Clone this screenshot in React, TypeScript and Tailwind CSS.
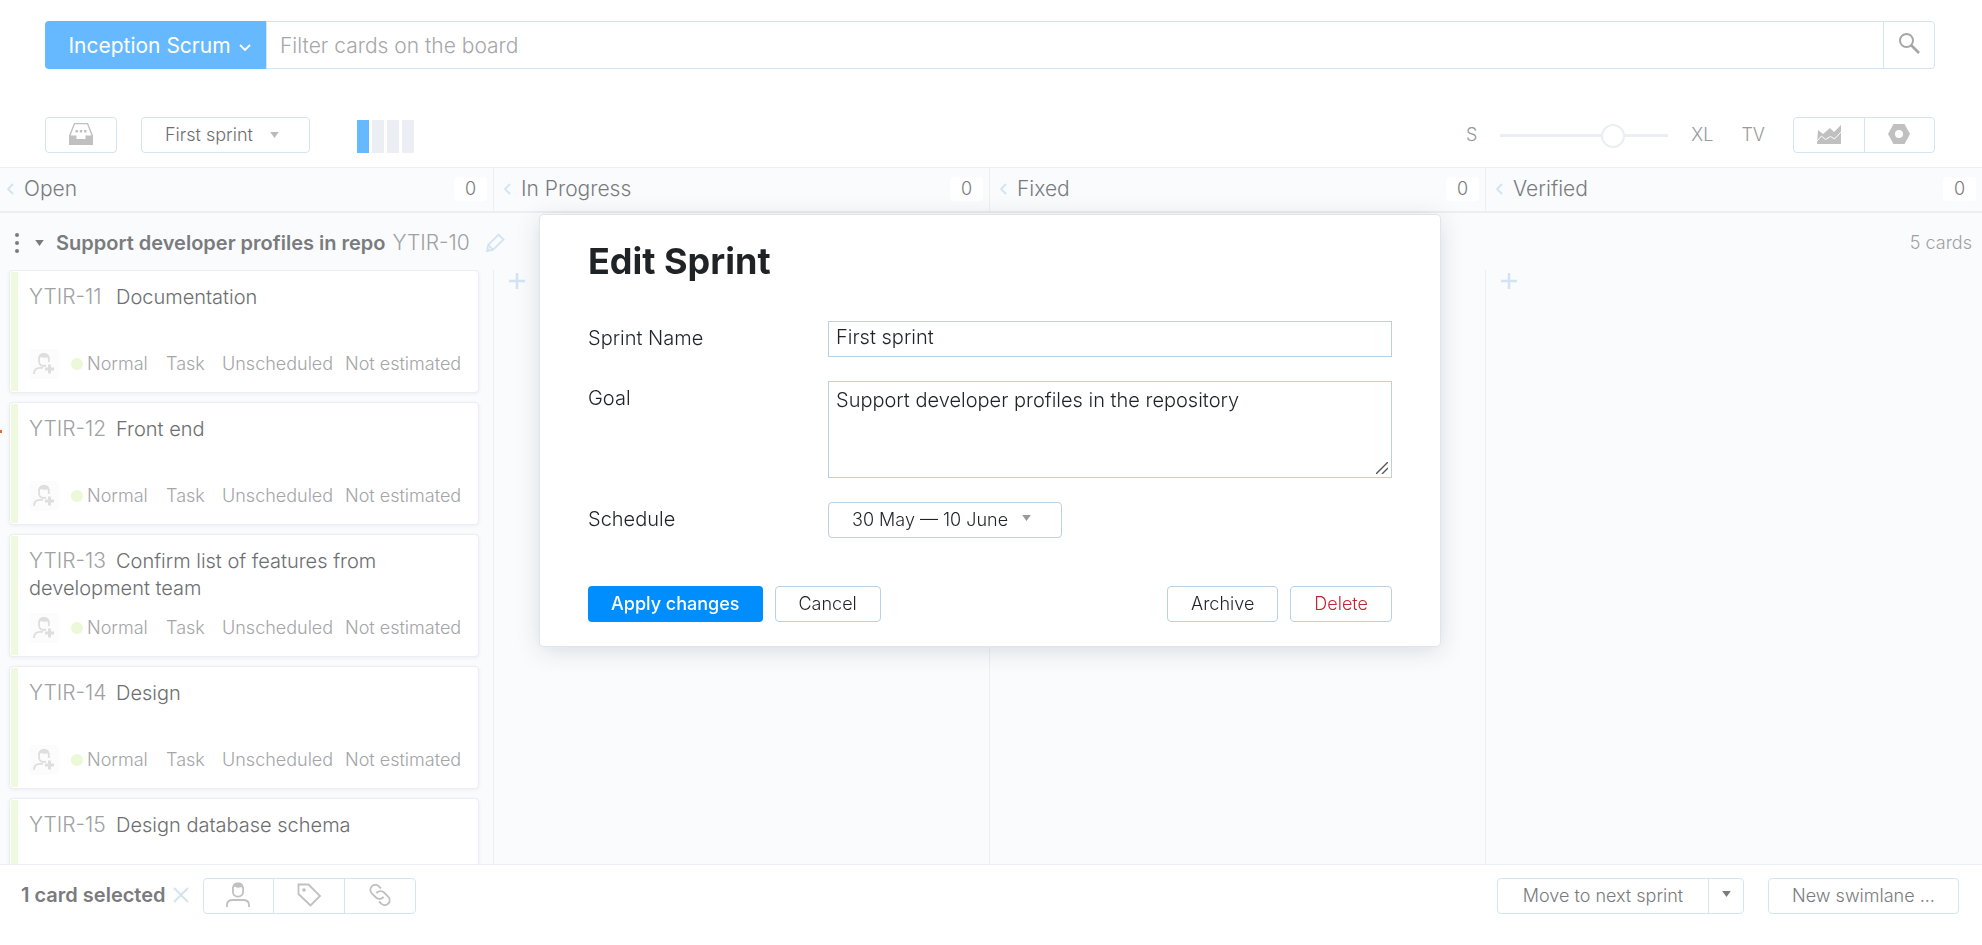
import { useState } from "react";
import type { ReactNode } from "react";

type Card = { id: string; title: string; fields?: [string, string, string, string] };

const COLUMNS = ["Open", "In Progress", "Fixed", "Verified"];

const DEFAULT_FIELDS: Card["fields"] = ["Normal", "Task", "Unscheduled", "Not estimated"];

const CARDS: Card[] = [
  { id: "YTIR-11", title: "Documentation", fields: DEFAULT_FIELDS },
  { id: "YTIR-12", title: "Front end", fields: DEFAULT_FIELDS },
  { id: "YTIR-13", title: "Confirm list of features from development team", fields: DEFAULT_FIELDS },
  { id: "YTIR-14", title: "Design", fields: DEFAULT_FIELDS },
  { id: "YTIR-15", title: "Design database schema" },
];

const boardGrid = "grid grid-cols-[494fr_496fr_496fr_496fr]";

function Triangle({ className }: { className: string }) {
  return (
    <svg viewBox="0 0 10 7" className={className} fill="currentColor" aria-hidden="true">
      <path d="M0 0h10L5 7z" />
    </svg>
  );
}

function UserIcon() {
  return (
    <svg viewBox="0 0 24 26" className="h-[26px] w-6" fill="none" stroke="currentColor" strokeWidth="1.8" aria-hidden="true">
      <path d="M1 25v-2c0-3.5 2.5-5 6-5h10c3.5 0 6 1.5 6 5v2" />
      <path d="M6.900 5v4.500c0 3 2 5.200 5.100 5.200s5.100-2.200 5.100-5.200V5" />
      <path d="M6.200 7c0-4.600 2-6.500 5.800-6.500 3.800 0 5.800 1.900 5.800 6.500-1-1.200-1.800-1.700-3-1.700-2 .6-4 .6-5.600-.6C8 5 7 5.700 6.200 7z" fill="currentColor" stroke="none" />
    </svg>
  );
}

function AddUserIcon() {
  return (
    <svg viewBox="0 0 22 22" className="size-[22px]" fill="none" stroke="currentColor" strokeWidth="1.8" aria-hidden="true">
      <path d="M1 21c0-4 2.5-6.200 6-6.200h3" />
      <path d="M6 4v3.500c0 3.500 2 5.500 4.800 5.500.8 0 1.500-.2 2.200-.6M15.800 9V4" />
      <path d="M5.200 6c0-4 2-6 5.700-6 3.800 0 5.700 2 5.700 6-1-1.200-2-1.500-3-1.500-2 .5-4 .3-5.400-.4C7 4.400 6 5 5.200 6z" fill="currentColor" stroke="none" />
      <path d="M12 16h9M16.500 11.500v9" strokeWidth="3" />
    </svg>
  );
}

function LinkIcon() {
  return (
    <svg viewBox="0 0 22 22" className="size-[22px]" fill="none" stroke="currentColor" strokeWidth="1.8" aria-hidden="true">
      <path d="M12 4.500L9.800 2.300a4.900 4.900 0 00-7 0 4.900 4.900 0 000 7l4.200 4.200a4.900 4.900 0 007 0l.5-.8" />
      <path d="M10 17.500l2.200 2.200a4.900 4.900 0 007 0 4.900 4.900 0 000-7L15 8.500a4.900 4.900 0 00-7 0l-.5.8" />
    </svg>
  );
}

function BoardCard({ card }: { card: Card }) {
  return (
    <article className="flex h-[123px] shrink-0 overflow-hidden rounded-[4px] border border-[#eaedf3] bg-white p-px shadow-[0_1px_4px_rgba(0,42,76,0.06)]">
      <div className="w-[7px] shrink-0 rounded-l-[2px] bg-[#eef9dd]" />
      <div className="flex flex-1 flex-col pt-[11px] pr-3 pb-3 pl-[11px]">
        <h3 className="text-xl leading-[27px] font-light text-[#6c6e70]">
          <a href="#" className="inline-block w-[87px] text-[21px] text-[#a0a1a3]">{card.id}</a>
          {card.title}
        </h3>
        {card.fields && (
          <div className="mt-auto flex h-[30px] items-center text-lg leading-6 font-light whitespace-nowrap text-[#a3a5a7]">
            <button type="button" aria-label="Assign" className="grid size-[30px] place-items-center rounded-[4px] bg-[#fcfcfc] text-[#dedede]">
              <AddUserIcon />
            </button>
            <span className="ml-3 size-3 rounded-full bg-[#ecf8d8]" />
            <span className="ml-1 w-[79px]">{card.fields[0]}</span>
            <span className="w-14">{card.fields[1]}</span>
            <span className="w-[123px]">{card.fields[2]}</span>
            <span>{card.fields[3]}</span>
          </div>
        )}
      </div>
    </article>
  );
}

function AddCardButton() {
  return (
    <button type="button" aria-label="Add card" className="mt-0.5 ml-3.5 block text-[#d3e3f1]">
      <svg viewBox="0 0 18 18" className="size-[18px]" stroke="currentColor" strokeWidth="2.5" aria-hidden="true">
        <path d="M1 9h16M9 1v16" />
      </svg>
    </button>
  );
}

function Header() {
  return (
    <header className="mt-[21px] mr-[47px] ml-[45px] flex h-12 shrink-0 text-[21px] font-light">
      <button type="button" className="flex w-[221px] items-center justify-center gap-2 rounded-l-[4px] bg-[#66b9ff] pt-0.5 pl-2 font-normal text-white">
        Inception Scrum
        <svg viewBox="0 0 12 8" className="mt-1 h-2 w-3" fill="none" stroke="currentColor" strokeWidth="1.8" aria-hidden="true">
          <path d="M1 1l5 5 5-5" />
        </svg>
      </button>
      <input
        type="text"
        aria-label="Filter cards"
        placeholder="Filter cards on the board"
        className="min-w-0 flex-1 border border-[#d3e4f3] bg-white px-[13px] pt-0.5 outline-none placeholder:text-[#a5a7a8]"
      />
      <button type="button" aria-label="Search" className="-ml-px grid w-[52px] place-items-center rounded-r-[4px] border border-[#d3e4f3] text-[#a5a6a8]">
        <svg viewBox="0 0 21 21" className="mb-1 size-[21px]" fill="none" stroke="currentColor" aria-hidden="true">
          <circle cx="7.5" cy="7.5" r="6.5" strokeWidth="2" />
          <path d="M12 12l8 8" strokeWidth="2.6" />
        </svg>
      </button>
    </header>
  );
}

function Toolbar() {
  const [zoom, setZoom] = useState(70);

  return (
    <div className="mt-12 mr-[47px] mb-3.5 ml-[45px] flex h-9 shrink-0 items-center text-lg font-light text-[#97999b]">
      <button type="button" aria-label="Backlog" className="grid h-9 w-[72px] place-items-center rounded-[4px] border border-[#d3e4f3] text-[#c0c0c0]">
        <svg viewBox="0 0 24 22" className="mb-0.5 h-[22px] w-6" fill="currentColor" aria-hidden="true">
          <path d="M5 0h14l5 12.500V22H0v-9.500zM5.900 1.300L1.600 12.500h5.900V16h9v-3.500h5.900L18.100 1.300z" fillRule="evenodd" />
          <path d="M6.500 7h2.400v2.400H6.500zM10.800 7h2.400v2.400h-2.400zM15.100 7h2.400v2.400h-2.400z" />
        </svg>
      </button>

      <div className="relative ml-6">
        <select aria-label="Sprint" className="h-9 w-[169px] appearance-none rounded-[4px] border border-[#d3e4f3] bg-white pl-[23px] text-lg text-[#6c6e70]">
          <option>First sprint</option>
        </select>
        <Triangle className="pointer-events-none absolute top-[15px] right-[31px] h-1.5 w-[9px] text-[#bbbbbb]" />
      </div>

      <div className="ml-[47px] flex h-[33px] gap-[3px] self-end">
        <div className="w-3 bg-[#66b9ff]" />
        <div className="w-3 bg-[#ebeef3]" />
        <div className="w-3 bg-[#ebeef3]" />
        <div className="w-3 bg-[#ebeef3]" />
      </div>

      <div className="ml-auto flex items-center">
        <label htmlFor="card-size">S</label>
        <input
          id="card-size"
          type="range"
          min={0}
          max={100}
          value={zoom}
          onChange={(e) => setZoom(Number(e.target.value))}
          className="mx-[23px] h-6 w-[168px] appearance-none bg-transparent [&::-webkit-slider-runnable-track]:h-[3px] [&::-webkit-slider-runnable-track]:bg-[#ebeef3] [&::-webkit-slider-thumb]:-mt-[10px] [&::-webkit-slider-thumb]:size-6 [&::-webkit-slider-thumb]:appearance-none [&::-webkit-slider-thumb]:rounded-full [&::-webkit-slider-thumb]:border-2 [&::-webkit-slider-thumb]:border-[#ebeef3] [&::-webkit-slider-thumb]:bg-white"
        />
        <span>XL</span>
        <button type="button" className="mr-7 ml-7">TV</button>
        <div className="flex h-9 w-[142px] divide-x divide-[#d3e4f3] rounded-[4px] border border-[#d3e4f3] text-[#c0c0c0]">
          <button type="button" aria-label="Chart" className="grid flex-1 place-items-center">
            <svg viewBox="0 0 24 19" className="mb-0.5 h-[19px] w-6" aria-hidden="true">
              <path d="M1 5l5 4 7-6 4 4 7-7v19H0z" fill="currentColor" />
              <path d="M0 16l4.500-5 4 3.500 5-3 4 2.500L24 7" fill="none" stroke="#fff" strokeWidth="1" />
            </svg>
          </button>
          <button type="button" aria-label="Settings" className="grid flex-1 place-items-center">
            <svg viewBox="0 0 22 20" className="mb-0.5 h-5 w-[22px]" fill="currentColor" aria-hidden="true">
              <path d="M5.500 0h11L22 10l-5.500 10h-11L0 10zM11 6a4 4 0 100 8 4 4 0 000-8z" fillRule="evenodd" />
            </svg>
          </button>
        </div>
      </div>
    </div>
  );
}

function Board() {
  return (
    <main className="flex min-h-0 flex-1 flex-col bg-[#fafbfd]">
      <div className={`${boardGrid} h-[46px] shrink-0 border-t border-b-2 border-[#ebeef3]`}>
        {COLUMNS.map((name) => (
          <div key={name} className="flex items-center border-r border-[#ebeef3] pr-1.5 pb-0.5 pl-2.5 first:pl-[7px] last:border-r-0">
            <button type="button" aria-label={`Collapse ${name}`} className="text-[#d3e3f1]">
              <svg viewBox="0 0 7 12" className="h-3 w-[7px]" fill="none" stroke="currentColor" strokeWidth="1.8" aria-hidden="true">
                <path d="M6 1L1 6l5 5" />
              </svg>
            </button>
            <h2 className="ml-2.5 text-[21px] leading-6 font-light text-[#797b7d]">{name}</h2>
            <span className="ml-auto grid h-6 w-[33px] place-items-center rounded-[4px] bg-white text-lg leading-6 font-light text-[#797b7d]">0</span>
          </div>
        ))}
      </div>

      <div className="flex h-[57px] shrink-0 items-center pt-1 pr-2.5 pb-0.5 pl-[15px] text-xl leading-6 font-light text-[#a0a1a3]">
        <button type="button" aria-label="Swimlane menu" className="text-[#797b7d]">
          <svg viewBox="0 0 4 20" className="h-5 w-1" fill="currentColor" aria-hidden="true">
            <circle cx="2" cy="2" r="2" />
            <circle cx="2" cy="10" r="2" />
            <circle cx="2" cy="18" r="2" />
          </svg>
        </button>
        <button type="button" aria-label="Collapse swimlane" className="ml-4 text-[#797b7d]">
          <Triangle className="h-1.5 w-[9px]" />
        </button>
        <h2 className="ml-3 font-semibold text-[#797b7d]">Support developer profiles in repo</h2>
        <a href="#" className="ml-[7px] text-[21px]">YTIR-10</a>
        <button type="button" aria-label="Edit" className="ml-4 text-[#d3e3f1]">
          <svg viewBox="0 0 19 19" className="size-[19px]" fill="none" stroke="currentColor" strokeWidth="1.8" aria-hidden="true">
            <path d="M1 18l1.200-6L12.500 1.500l5 5L7 16.800zM2.200 12L7 16.800M1 18l2-2" />
          </svg>
        </button>
        <span className="ml-auto text-lg">5 cards</span>
      </div>

      <div className={`${boardGrid} min-h-0 flex-1 overflow-hidden`}>
        <div className="flex min-h-0 flex-col gap-[9px] border-r border-[#ebeef3] pr-3.5 pl-[9px]">
          {CARDS.map((card) => (
            <BoardCard key={card.id} card={card} />
          ))}
        </div>
        {COLUMNS.slice(1).map((name) => (
          <div key={name} className="border-r border-[#ebeef3] last:border-r-0">
            <AddCardButton />
          </div>
        ))}
      </div>
    </main>
  );
}

function Footer() {
  return (
    <footer className="flex h-[81px] shrink-0 items-start border-t border-[#ebeef3] bg-white pt-[13px] pr-[23px] pl-[21px] text-lg font-light text-[#797b7d]">
      <strong className="text-xl leading-[34px] font-semibold">1 card selected</strong>
      <button type="button" aria-label="Clear selection" className="ml-[7px] grid h-[34px] place-items-center text-[#d3e3f1]">
        <svg viewBox="0 0 16 16" className="size-4" stroke="currentColor" strokeWidth="1.8" aria-hidden="true">
          <path d="M1 1l14 14M15 1L1 15" />
        </svg>
      </button>
      <div className="ml-3.5 flex h-9 w-[213px] divide-x divide-[#d3e4f3] rounded-[4px] border border-[#d3e4f3] text-[#c0c0c0]">
        <button type="button" aria-label="Assignee" className="grid flex-1 place-items-center pb-0.5">
          <UserIcon />
        </button>
        <button type="button" aria-label="Tag" className="grid flex-1 place-items-center pb-0.5">
          <svg viewBox="0 0 24 24" className="size-6" fill="none" stroke="currentColor" strokeWidth="1.8" aria-hidden="true">
            <path d="M1.500 1.500h10L23 13 13.500 22.500 1.500 11z" />
            <circle cx="7" cy="7" r="1.800" fill="currentColor" stroke="none" />
          </svg>
        </button>
        <button type="button" aria-label="Link" className="grid flex-1 place-items-center pb-0.5">
          <LinkIcon />
        </button>
      </div>

      <div className="ml-auto flex h-9 divide-x divide-[#d3e4f3] rounded-[4px] border border-[#d3e4f3]">
        <button type="button" className="w-[211px]">Move to next sprint</button>
        <button type="button" aria-label="More sprints" className="grid w-[34px] place-items-center pb-1">
          <Triangle className="h-1.5 w-[9px]" />
        </button>
      </div>
      <button type="button" className="ml-6 h-9 w-[191px] rounded-[4px] border border-[#d3e4f3]">New swimlane ...</button>
    </footer>
  );
}

function FormRow({ id, label, children }: { id: string; label: string; children: ReactNode }) {
  return (
    <div className="flex items-start">
      <label htmlFor={id} className="w-60 shrink-0 pt-[5px] text-xl leading-6">{label}</label>
      <div className="relative flex min-w-0 flex-1">{children}</div>
    </div>
  );
}

function DialogButton({ className, children }: { className?: string; children: ReactNode }) {
  return (
    <button type="button" className={`h-9 rounded-[4px] border border-[#b8d1e5] px-[23px] text-lg ${className ?? ""}`}>
      {children}
    </button>
  );
}

function EditSprintDialog() {
  const [name, setName] = useState("First sprint");
  const [goal, setGoal] = useState("Support developer profiles in the repository");

  return (
    <div className="fixed inset-0 flex items-start justify-center pt-[215px] pr-0.5">
      <form
        role="dialog"
        aria-labelledby="dialog-title"
        className="w-[900px] max-w-full rounded-[4px] bg-white px-12 pt-[26px] pb-6 font-light text-[#1f2326] shadow-[0_0_0_1px_#dfe5eb,0_4px_24px_rgba(0,42,56,0.15)]"
      >
        <h1 id="dialog-title" className="text-4xl leading-10 font-bold">Edit Sprint</h1>
        <div className="mt-10 flex flex-col gap-6">
          <FormRow id="sprint-name" label="Sprint Name">
            <input
              id="sprint-name"
              value={name}
              onChange={(e) => setName(e.target.value)}
              className="h-9 w-full border border-[#b8d1e5] px-[7px] pb-1 text-xl outline-none"
            />
          </FormRow>
          <FormRow id="goal" label="Goal">
            <textarea
              id="goal"
              value={goal}
              onChange={(e) => setGoal(e.target.value)}
              className="block h-[97px] w-full resize-none border border-[#b8d1e5] px-[7px] py-1.5 text-xl leading-6 outline-none"
            />
            <svg viewBox="0 0 12 12" className="pointer-events-none absolute right-1 bottom-1 size-3" stroke="#555555" strokeWidth="1.4" aria-hidden="true">
              <path d="M0 12L12 0M6 12l6-6" />
            </svg>
          </FormRow>
          <FormRow id="schedule" label="Schedule">
            <button id="schedule" type="button" className="flex h-9 items-center rounded-[4px] border border-[#b8d1e5] pr-[30px] pl-[23px] text-lg">
              30 May — 10 June
              <Triangle className="mb-1 ml-3.5 h-1.5 w-[9px] text-[#999999]" />
            </button>
          </FormRow>
        </div>
        <div className="mt-12 flex gap-3">
          <button type="submit" className="h-9 rounded-[4px] bg-[#008eff] px-[23px] text-lg font-medium text-white">Apply changes</button>
          <DialogButton>Cancel</DialogButton>
          <DialogButton className="ml-auto">Archive</DialogButton>
          <DialogButton className="text-[#c22731]">Delete</DialogButton>
        </div>
      </form>
    </div>
  );
}

export default function App() {
  return (
    <div className="relative flex h-screen flex-col overflow-hidden bg-white font-[Inter,sans-serif]">
      <Header />
      <Toolbar />
      <Board />
      <Footer />
      {/* Edge marker of the selected card */}
      <div className="absolute top-[430px] left-0 h-[3px] w-0.5 bg-[#f26522]" />
      <EditSprintDialog />
    </div>
  );
}
